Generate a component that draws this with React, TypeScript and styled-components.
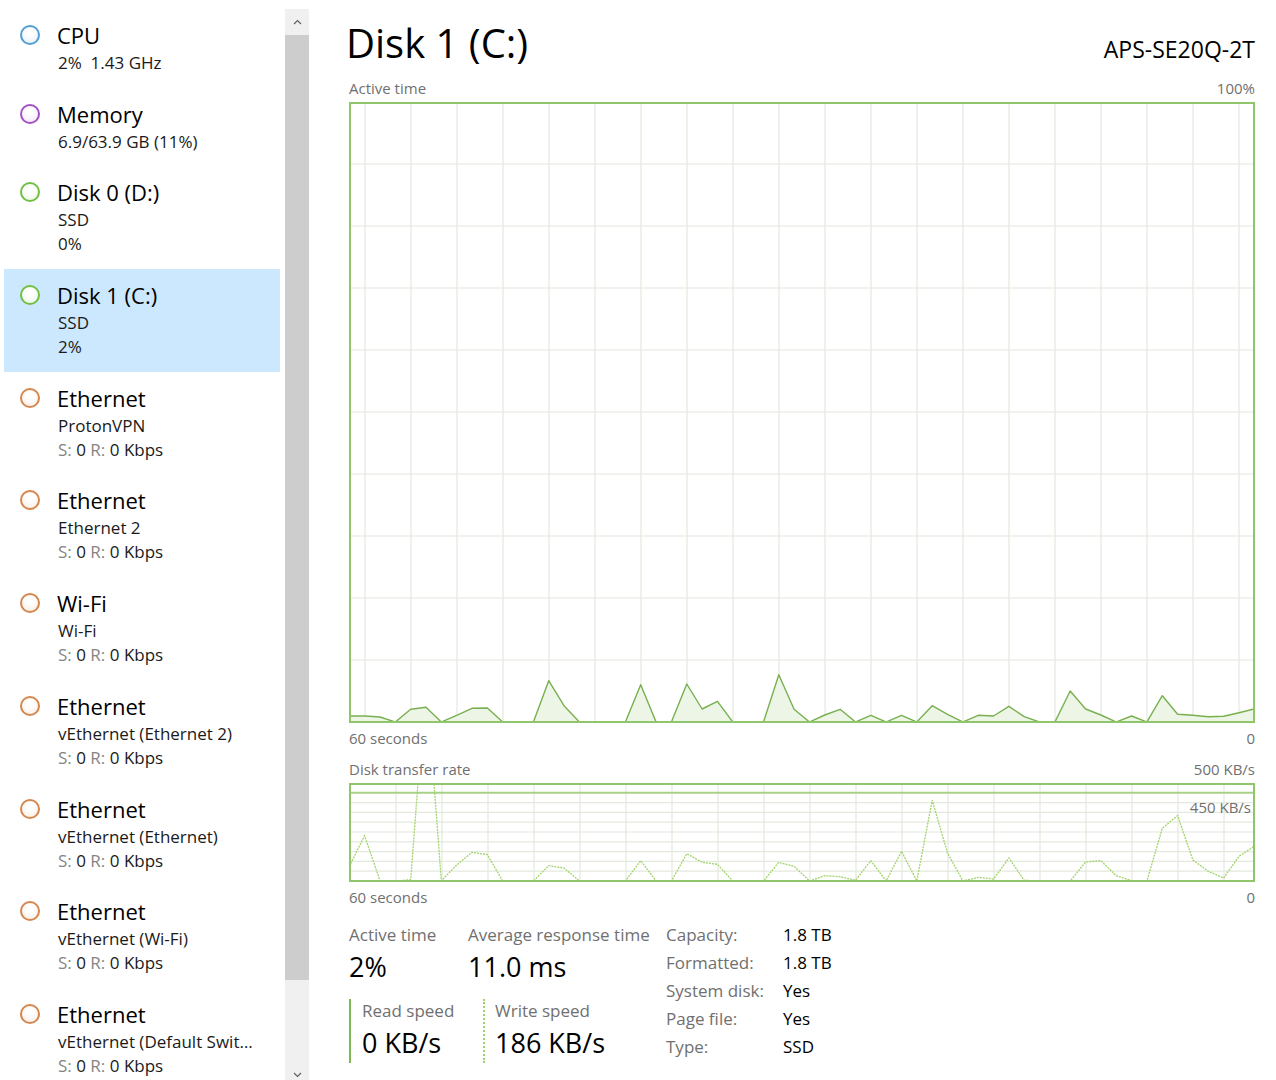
import React from 'react';
import styled, { createGlobalStyle } from 'styled-components';

type Kind = 'cpu' | 'memory' | 'disk' | 'net';

interface Resource {
  kind: Kind;
  title: string;
  lines: React.ReactNode[];
  selected?: boolean;
}

const ringColor: Record<Kind, string> = {
  cpu: '#529fd6',
  memory: '#a352c6',
  disk: '#72bf45',
  net: '#d5874e',
};

const fillColor: Record<Kind, string> = {
  cpu: '#e6eef6',
  memory: '#f1e7f5',
  disk: '#eaf5e2',
  net: '#f7ece3',
};

const GRID = '#e3e9dd';
const FRAME = '#8fc66b';
const MUTED = '#707070';

// px heights above the baseline, read off the reference (chart 620px / 98px tall)
const activeTime = [
  6, 6, 5, 0, 12.7, 14.7, 0, 6.7, 13.7, 14, 0, 0, 0, 41.3, 16.3, 0, 0, 0, 0, 37.3,
  0, 0, 38, 13, 20.7, 0, 0, 0, 47.3, 12.7, 0, 7, 12.7, 0, 6.7, 0, 6.7, 0, 16.3, 7.7,
  0, 6.7, 6, 15.7, 5.3, 0, 0, 31, 13, 7, 0, 6, 0, 26.3, 7.7, 6.7, 5.3, 5.7, 9.3, 13,
];

const writeRate = [
  14.7, 45.3, 0.3, 0, 1.3, 204, 0.3, 16, 28.7, 26.3, 0, 0, 0, 15.3, 13, 0, 0, 0, 0, 20.3,
  0, 0, 27.3, 18.7, 16.7, 0, 0, 0, 18.7, 14.7, 0, 5.3, 4.3, 0.7, 20.3, 0, 29.7, 0, 80.7, 28,
  0, 3.7, 2, 23, 0.7, 0, 0, 0, 19, 20.3, 5.3, 0.3, 0, 52.7, 65.3, 21, 9.7, 3, 24.7, 34.7,
];

const STEP = 905 / 59;
const xAt = (i: number) => 0.3 + i * STEP;
const toPoints = (data: number[], base: number) =>
  data.map((v, i) => `${xAt(i).toFixed(1)},${(base - v).toFixed(1)}`).join(' ');

function NetRate() {
  return (
    <>
      <Dim>S:</Dim> 0 <Dim>R:</Dim> 0 Kbps
    </>
  );
}

const resources: Resource[] = [
  { kind: 'cpu', title: 'CPU', lines: ['2%\u00a0\u00a01.43 GHz'] },
  { kind: 'memory', title: 'Memory', lines: ['6.9/63.9 GB (11%)'] },
  { kind: 'disk', title: 'Disk 0 (D:)', lines: ['SSD', '0%'] },
  { kind: 'disk', title: 'Disk 1 (C:)', lines: ['SSD', '2%'], selected: true },
  { kind: 'net', title: 'Ethernet', lines: ['ProtonVPN', <NetRate />] },
  { kind: 'net', title: 'Ethernet', lines: ['Ethernet 2', <NetRate />] },
  { kind: 'net', title: 'Wi-Fi', lines: ['Wi-Fi', <NetRate />] },
  { kind: 'net', title: 'Ethernet', lines: ['vEthernet (Ethernet 2)', <NetRate />] },
  { kind: 'net', title: 'Ethernet', lines: ['vEthernet (Ethernet)', <NetRate />] },
  { kind: 'net', title: 'Ethernet', lines: ['vEthernet (Wi-Fi)', <NetRate />] },
  { kind: 'net', title: 'Ethernet', lines: ['vEthernet (Default Switch)', <NetRate />] },
];

const properties = [
  ['Capacity:', '1.8 TB'],
  ['Formatted:', '1.8 TB'],
  ['System disk:', 'Yes'],
  ['Page file:', 'Yes'],
  ['Type:', 'SSD'],
];

const ActiveTimeChart = () => {
  const pts = toPoints(activeTime, 620);
  const lastX = xAt(activeTime.length - 1).toFixed(1);
  return (
    <svg width="902" height="617" viewBox="2 2 902 617" style={{ display: 'block' }}>
      {Array.from({ length: 20 }, (_, k) => (
        <line key={`v${k}`} x1={16 + 46 * k} x2={16 + 46 * k} y1={0} y2={621} stroke={GRID} strokeWidth={1.2} />
      ))}
      {Array.from({ length: 9 }, (_, k) => (
        <line key={`h${k}`} x1={0} x2={906} y1={62 * (k + 1)} y2={62 * (k + 1)} stroke={GRID} strokeWidth={1.2} />
      ))}
      <polygon points={`${pts} ${lastX},620 0.3,620`} fill="#edf5e6" />
      <polyline points={pts} fill="none" stroke="#78b04f" strokeWidth={1.4} strokeLinejoin="round" />
    </svg>
  );
};

const TransferChart = () => (
  <svg width="902" height="95" viewBox="2 2 902 95" style={{ display: 'block' }}>
    {Array.from({ length: 19 }, (_, k) => (
      <line key={`v${k}`} x1={47 + 46 * k} x2={47 + 46 * k} y1={0} y2={99} stroke={GRID} strokeWidth={1.2} />
    ))}
    {Array.from({ length: 8 }, (_, k) => (
      <line key={`h${k}`} x1={0} x2={906} y1={9.8 * (k + 2)} y2={9.8 * (k + 2)} stroke={GRID} strokeWidth={1.2} />
    ))}
    <line x1={0} x2={906} y1={9.8} y2={9.8} stroke="#a8d188" strokeWidth={2} />
    <polyline
      points={toPoints(writeRate, 98)}
      fill="none"
      stroke="#a3d36b"
      strokeWidth={1.3}
      strokeDasharray="2 1"
    />
  </svg>
);

const Chevron = ({ down }: { down?: boolean }) => (
  <svg width="9" height="6" viewBox="0 0 9 6">
    <polyline
      points={down ? '1,1 4.5,4.5 8,1' : '1,5 4.5,1.5 8,5'}
      fill="none"
      stroke="#606060"
      strokeWidth={1.2}
    />
  </svg>
);

const App = () => (
  <>
    <GlobalStyle />
    <Window>
      <Sidebar>
        {resources.map((r, i) => (
          <Item key={i} $selected={r.selected}>
            <Ring $kind={r.kind} />
            <ItemText>
              <ItemTitle>{r.title}</ItemTitle>
              {r.lines.map((line, j) => (
                <ItemLine key={j}>{line}</ItemLine>
              ))}
            </ItemText>
          </Item>
        ))}
      </Sidebar>

      <Scrollbar>
        <ArrowButton>
          <Chevron />
        </ArrowButton>
        <Thumb />
        <Track />
        <ArrowButton>
          <Chevron down />
        </ArrowButton>
      </Scrollbar>

      <Main>
        <Header>
          <Title>Disk 1 (C:)</Title>
          <Model>APS-SE20Q-2T</Model>
        </Header>

        <AxisRow $gap={11}>
          <span>Active time</span>
          <span>100%</span>
        </AxisRow>
        <ChartFrame $height={621}>
          <ActiveTimeChart />
        </ChartFrame>
        <AxisRow $gap={5}>
          <span>60 seconds</span>
          <span>0</span>
        </AxisRow>

        <AxisRow $gap={11}>
          <span>Disk transfer rate</span>
          <span>500 KB/s</span>
        </AxisRow>
        <ChartFrame $height={99}>
          <TransferChart />
          <ScaleMark>450 KB/s</ScaleMark>
        </ChartFrame>
        <AxisRow $gap={5}>
          <span>60 seconds</span>
          <span>0</span>
        </AxisRow>

        <Stats>
          <StatGroup>
            <StatRow>
              <StatCell $width={119}>
                <StatLabel>Active time</StatLabel>
                <StatValue>2%</StatValue>
              </StatCell>
              <StatCell $width={198}>
                <StatLabel>Average response time</StatLabel>
                <StatValue>11.0 ms</StatValue>
              </StatCell>
            </StatRow>
            <StatRow $gap={14}>
              <SpeedCell $width={134}>
                <SpeedLabel>Read speed</SpeedLabel>
                <StatValue $tall>0 KB/s</StatValue>
              </SpeedCell>
              <SpeedCell $dotted>
                <SpeedLabel>Write speed</SpeedLabel>
                <StatValue $tall>186 KB/s</StatValue>
              </SpeedCell>
            </StatRow>
          </StatGroup>

          <PropTable>
            {properties.map(([k, v]) => (
              <React.Fragment key={k}>
                <PropKey>{k}</PropKey>
                <PropValue>{v}</PropValue>
              </React.Fragment>
            ))}
          </PropTable>
        </Stats>
      </Main>
    </Window>
  </>
);

const GlobalStyle = createGlobalStyle`
  html, body {
    margin: 0;
    padding: 0;
    height: 100%;
    overflow: hidden;
    background: #fff;
  }
  body {
    font-family: 'Open Sans', 'Noto Sans', sans-serif;
    color: #000;
  }
`;

const Window = styled.div`
  display: flex;
  height: 1080px;
  overflow: hidden;
`;

const Sidebar = styled.div`
  width: 281px;
  flex-shrink: 0;
  padding: 9px 0 0 4px;
  display: flex;
  flex-direction: column;
`;

const Item = styled.div<{ $selected?: boolean }>`
  display: flex;
  align-items: flex-start;
  gap: 17px;
  padding: 10px 22px 12.7px 16px;
  width: 276px;
  box-sizing: border-box;
  flex-shrink: 0;
  background: ${({ $selected }) => ($selected ? '#cce8ff' : 'transparent')};
`;

const Ring = styled.span<{ $kind: Kind }>`
  width: 20px;
  height: 20px;
  margin-top: 6px;
  flex-shrink: 0;
  box-sizing: border-box;
  border-radius: 50%;
  border: 2px solid ${({ $kind }) => ringColor[$kind]};
  background: radial-gradient(circle at 50% 35%, #ffffff 20%, ${({ $kind }) => fillColor[$kind]} 100%);
`;

const ItemText = styled.div`
  display: flex;
  flex-direction: column;
  min-width: 0;
  flex: 1;
`;

const ItemTitle = styled.div`
  font-size: 22px;
  line-height: 32px;
  color: #000;
`;

const ItemLine = styled.div`
  font-size: 17px;
  line-height: 24px;
  padding-left: 1px;
  color: #1a1a1a;
  white-space: nowrap;
  overflow: hidden;
  text-overflow: ellipsis;
`;

const Dim = styled.span`
  color: #858585;
`;

const Scrollbar = styled.div`
  width: 24px;
  flex-shrink: 0;
  margin-top: 9px;
  height: 1079px;
  display: flex;
  flex-direction: column;
  background: #f0f0f0;
`;

const ArrowButton = styled.div`
  height: 26px;
  display: flex;
  align-items: center;
  justify-content: center;
  flex-shrink: 0;
`;

const Thumb = styled.div`
  height: 945px;
  flex-shrink: 0;
  background: #cdcdcd;
`;

const Track = styled.div`
  flex: 1;
`;

const Main = styled.div`
  flex: 1;
  min-width: 0;
  padding: 19px 21px 0 40px;
  display: flex;
  flex-direction: column;
`;

const Header = styled.div`
  display: flex;
  justify-content: space-between;
  align-items: baseline;
  height: 48px;
  line-height: 48px;
  flex-shrink: 0;
`;

const Title = styled.h1`
  margin: 0 0 0 -3px;
  font-size: 40px;
  line-height: 48px;
  font-weight: 400;
`;

const Model = styled.div`
  font-size: 23px;
  line-height: 48px;
`;

const AxisRow = styled.div<{ $gap: number }>`
  display: flex;
  justify-content: space-between;
  margin-top: ${({ $gap }) => $gap}px;
  font-size: 15px;
  line-height: 20px;
  color: ${MUTED};
`;

const ChartFrame = styled.div<{ $height: number }>`
  position: relative;
  margin-top: 4px;
  height: ${({ $height }) => $height}px;
  flex-shrink: 0;
  box-sizing: border-box;
  border: 2px solid ${FRAME};
  overflow: hidden;
`;

const ScaleMark = styled.span`
  position: absolute;
  right: 2px;
  top: 12px;
  font-size: 15px;
  line-height: 20px;
  color: ${MUTED};
`;

const Stats = styled.div`
  display: flex;
  margin-top: 14px;
`;

const StatGroup = styled.div`
  width: 317px;
  display: flex;
  flex-direction: column;
`;

const StatRow = styled.div<{ $gap?: number }>`
  display: flex;
  margin-top: ${({ $gap }) => $gap ?? 0}px;
`;

const StatCell = styled.div<{ $width?: number }>`
  width: ${({ $width }) => ($width ? `${$width}px` : 'auto')};
  display: flex;
  flex-direction: column;
`;

const SpeedCell = styled(StatCell)<{ $dotted?: boolean }>`
  box-sizing: border-box;
  border-left: 2px ${({ $dotted }) => ($dotted ? 'dotted #9fd16a' : 'solid #7cb950')};
  padding-left: ${({ $dotted }) => ($dotted ? 10 : 11)}px;
`;

const StatLabel = styled.div`
  font-size: 17px;
  line-height: 28px;
  color: ${MUTED};
  white-space: nowrap;
`;

const SpeedLabel = styled(StatLabel)`
  line-height: 24px;
`;

const StatValue = styled.div<{ $tall?: boolean }>`
  font-size: 27px;
  line-height: ${({ $tall }) => ($tall ? 40 : 36)}px;
  color: #000;
  white-space: nowrap;
`;

const PropTable = styled.div`
  display: grid;
  grid-template-columns: 117px auto;
  font-size: 17px;
  line-height: 28px;
  align-content: start;
`;

const PropKey = styled.span`
  color: ${MUTED};
`;

const PropValue = styled.span`
  color: #000;
`;

export default App;
